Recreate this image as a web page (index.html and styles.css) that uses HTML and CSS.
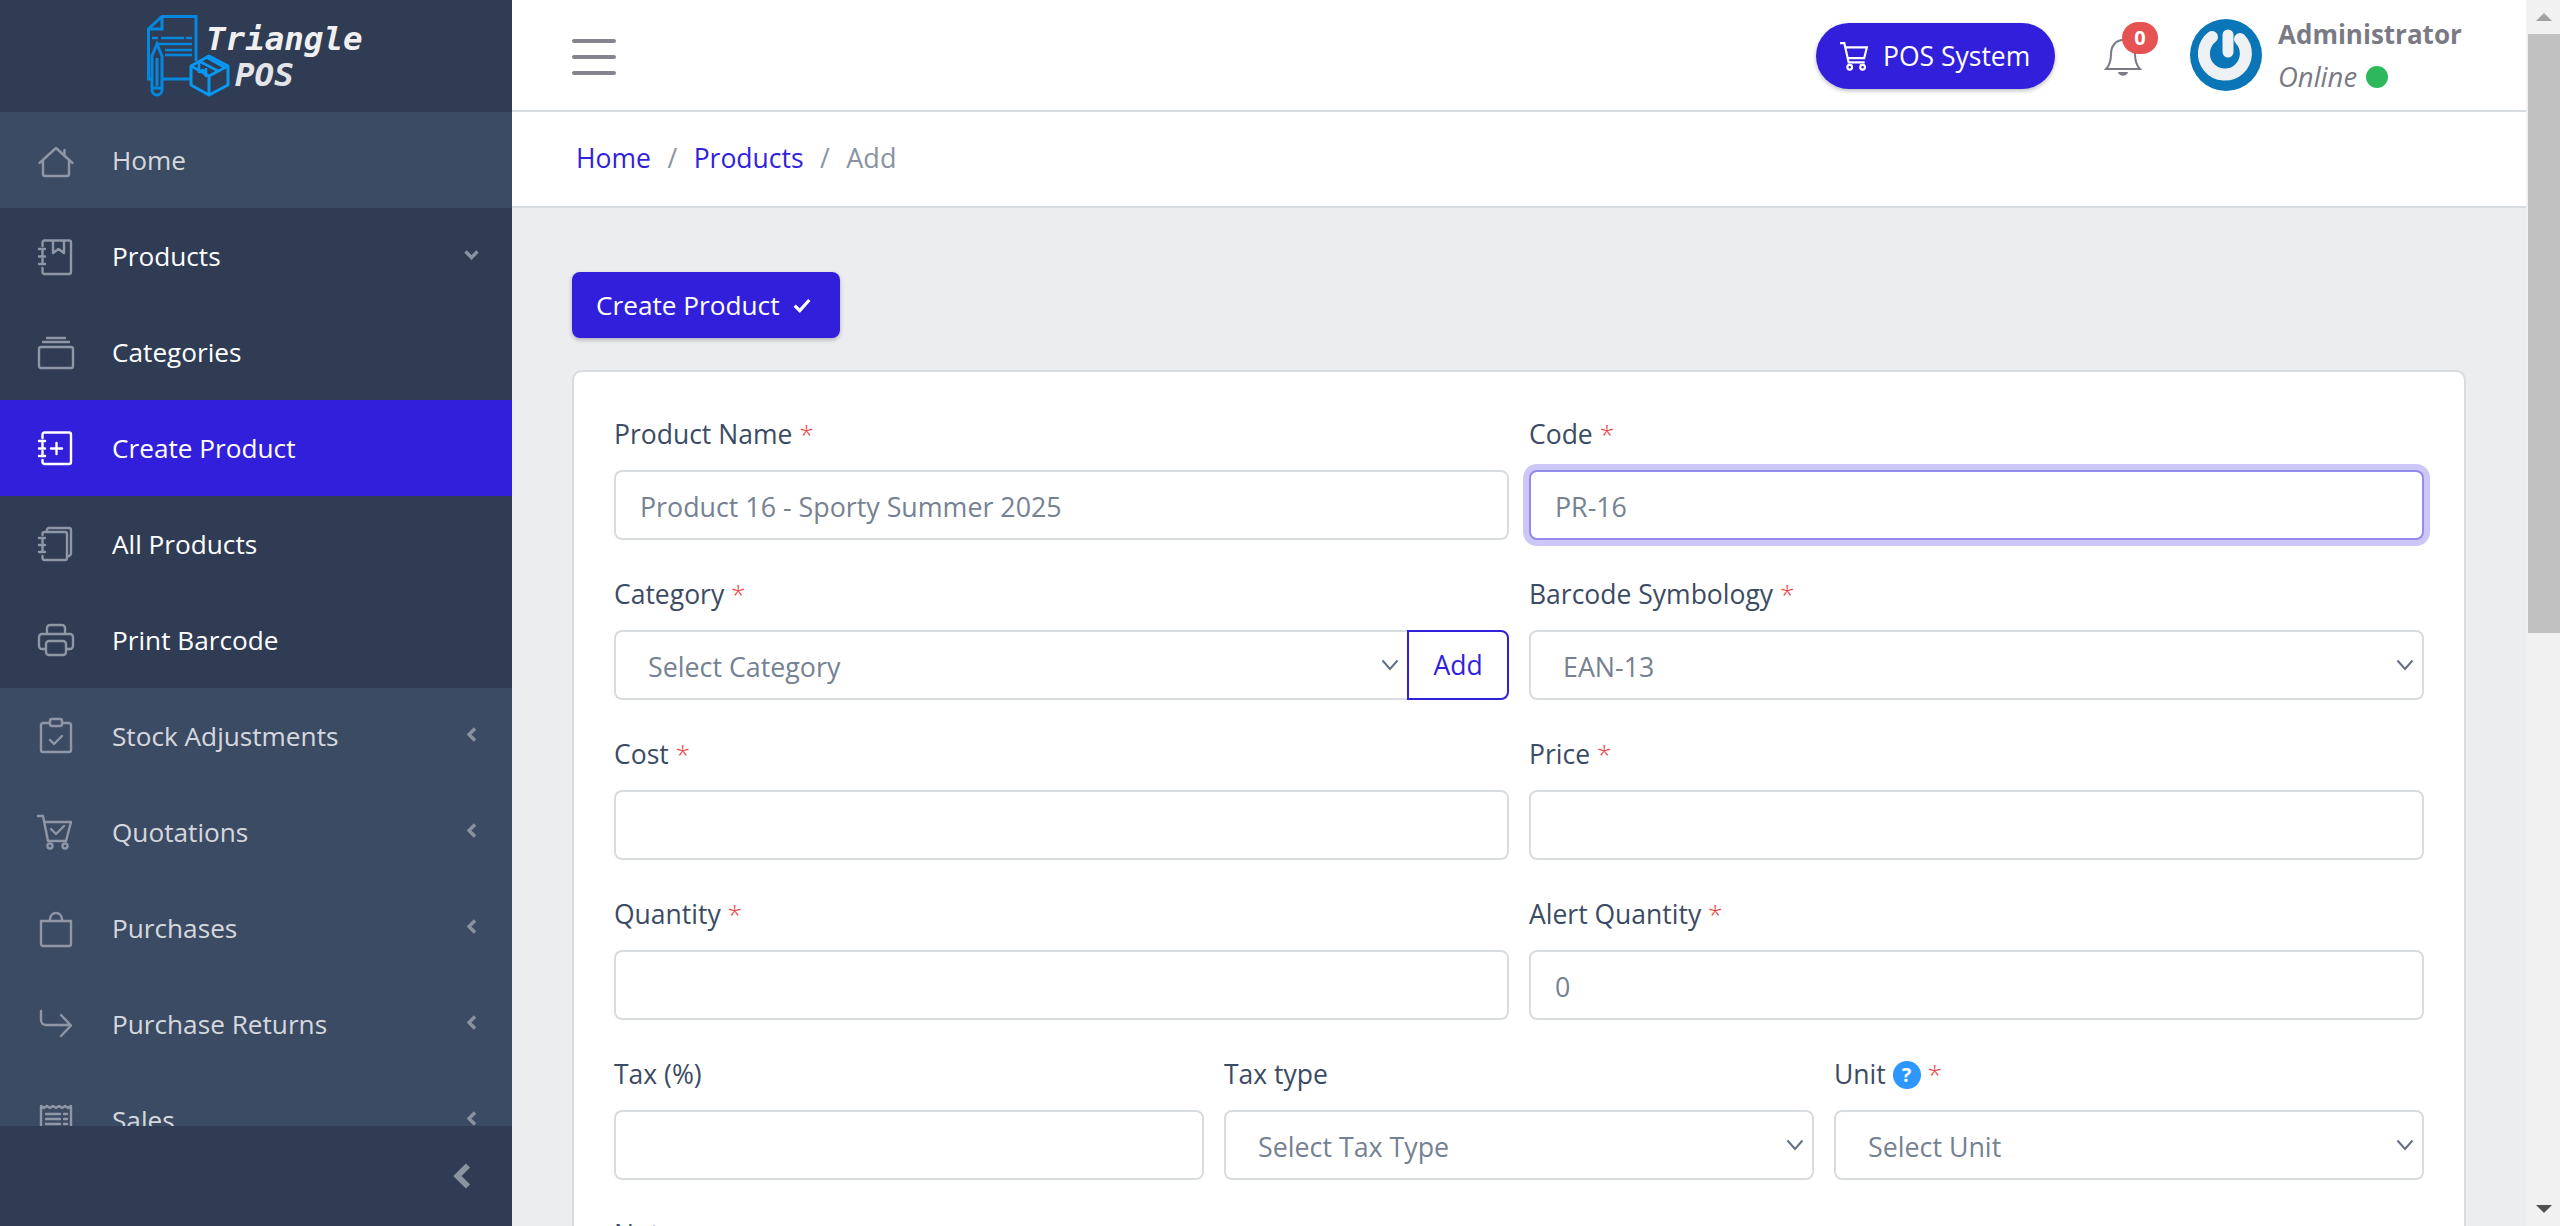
FILE: index.html
```html
<!DOCTYPE html>
<html lang="en">
<head>
<meta charset="utf-8">
<title>Triangle POS - Create Product</title>
<link rel="stylesheet" href="styles.css">
</head>
<body>
<div class="app">
  <aside class="sidebar">
    <div class="brand">
      <svg class="brand-mark" viewBox="145 12 87 86" fill="none" stroke-width="3">
        <g stroke="#0487dd">
          <path d="M190 79H148.500V29L162 16.500H196V61"/>
          <path d="M162 16.500V29H148.500"/>
          <path d="M152 38H158M161 38H184M186 38H192" stroke-width="2.400"/>
          <path d="M158 44H192M165 50H192M165 55H192" stroke-width="2.400"/>
          <path d="M152 88V56L157 44L162 56V88ZM152 88V90a5 5 0 0 0 10 0V88M157 58V86" fill="#303c54"/>
        </g>
        <g stroke="#0898f2" stroke-linejoin="round">
          <path d="M209 56L228 66V85L209 95L191 85V66Z" fill="#303c54"/>
          <path d="M191 66L209 76L228 66M209 76V95"/>
          <path d="M199 61L218 71M206 57L224 67M199 61V72L203 70L206 76V68" stroke-width="2.600"/>
        </g>
      </svg>
      <div class="brand-text">
        <div>Triangle</div>
        <div class="brand-sub">POS</div>
      </div>
    </div>
    <nav class="nav">
      <a class="nav-item lighter">
        <svg class="nav-icon" viewBox="0 0 36 36"><path d="M1.500 21L18 6L34.500 21M5 18V32a2 2 0 0 0 2 2H29a2 2 0 0 0 2-2V18M26.500 8V14"/></svg>
        <span class="nav-label">Home</span>
      </a>
      <div class="nav-group">
        <a class="nav-item open">
          <svg class="nav-icon" viewBox="0 0 36 36"><path d="M4.500 8V4.500a2 2 0 0 1 2-2H31a2 2 0 0 1 2 2V34a2 2 0 0 1-2 2H6.500a2 2 0 0 1-2-2V30M4.500 13V17M4.500 21V25M15 3V15L20.500 11L26 15V3M1 11H7M1 18.500H7M1 26H7"/></svg>
          <span class="nav-label">Products</span>
          <svg class="nav-chevron" viewBox="0 0 15 10"><path d="M1.500 1.500L7.500 7.500L13.500 1.500"/></svg>
        </a>
        <a class="nav-item open">
          <svg class="nav-icon" viewBox="0 0 36 36"><path d="M3 13H33a2 2 0 0 1 2 2V32a2 2 0 0 1-2 2H3a2 2 0 0 1-2-2V15a2 2 0 0 1 2-2ZM5 8H31M9 4H27"/></svg>
          <span class="nav-label">Categories</span>
        </a>
        <a class="nav-item active">
          <svg class="nav-icon" viewBox="0 0 36 36"><path d="M4.500 8V4.500a2 2 0 0 1 2-2H31a2 2 0 0 1 2 2V32a2 2 0 0 1-2 2H6.500a2 2 0 0 1-2-2V30M4.500 13V17M4.500 21V25M1 11H7M1 18.500H7M1 26H7M13 18.500H24M18.500 13V24"/></svg>
          <span class="nav-label">Create Product</span>
        </a>
        <a class="nav-item open">
          <svg class="nav-icon" viewBox="0 0 36 36"><path d="M4.500 9V8a2 2 0 0 1 2-2H27a2 2 0 0 1 2 2V32a2 2 0 0 1-2 2H6.500a2 2 0 0 1-2-2V30M4.500 14V17M4.500 21V25M1 12H7M1 19H7M1 26H7M9 6V4a2 2 0 0 1 2-2H31a2 2 0 0 1 2 2V27a3 3 0 0 1-4 3"/></svg>
          <span class="nav-label">All Products</span>
        </a>
        <a class="nav-item open">
          <svg class="nav-icon" viewBox="0 0 36 36"><path d="M9 12V6a3 3 0 0 1 3-3H24a3 3 0 0 1 3 3V12M8 27H4a3 3 0 0 1-3-3V15a3 3 0 0 1 3-3H32a3 3 0 0 1 3 3V24a3 3 0 0 1-3 3H28M11 19H25a3 3 0 0 1 3 3V30a3 3 0 0 1-3 3H11a3 3 0 0 1-3-3V22a3 3 0 0 1 3-3Z"/></svg>
          <span class="nav-label">Print Barcode</span>
        </a>
      </div>
      <a class="nav-item lighter">
        <svg class="nav-icon" viewBox="0 0 36 36"><path d="M11 5H5a2 2 0 0 0-2 2V32a2 2 0 0 0 2 2H31a2 2 0 0 0 2-2V7a2 2 0 0 0-2-2H25M14 1H22a2 2 0 0 1 2 2V6a2 2 0 0 1-2 2H14a2 2 0 0 1-2-2V3a2 2 0 0 1 2-2ZM12 22L16 26L24 18"/></svg>
        <span class="nav-label">Stock Adjustments</span>
        <svg class="nav-chevron side" viewBox="0 0 10 15"><path d="M8 1.500L2 7.500L8 13.500"/></svg>
      </a>
      <a class="nav-item lighter">
        <svg class="nav-icon" viewBox="0 0 36 36"><path d="M0 2H5L10 27H28L33 8H6M13 15L18 20L26 12"/><circle cx="12" cy="32" r="2.500"/><circle cx="27" cy="32" r="2.500"/></svg>
        <span class="nav-label">Quotations</span>
        <svg class="nav-chevron side" viewBox="0 0 10 15"><path d="M8 1.500L2 7.500L8 13.500"/></svg>
      </a>
      <a class="nav-item lighter">
        <svg class="nav-icon" viewBox="0 0 36 36"><path d="M3 11H33V34a2 2 0 0 1-2 2H5a2 2 0 0 1-2-2ZM12 11V9a6 6 0 0 1 12 0V11"/></svg>
        <span class="nav-label">Purchases</span>
        <svg class="nav-chevron side" viewBox="0 0 10 15"><path d="M8 1.500L2 7.500L8 13.500"/></svg>
      </a>
      <a class="nav-item lighter">
        <svg class="nav-icon" viewBox="0 0 36 36"><path d="M3 5V14a5 5 0 0 0 5 5H32M23 9L33 19.500L23 30"/></svg>
        <span class="nav-label">Purchase Returns</span>
        <svg class="nav-chevron side" viewBox="0 0 10 15"><path d="M8 1.500L2 7.500L8 13.500"/></svg>
      </a>
      <a class="nav-item lighter">
        <svg class="nav-icon" viewBox="0 0 36 36"><path d="M3 34V4L6 6L9 4L12 6L15 4L18 6L21 4L24 6L27 4L30 6L33 4V34M8 12H22M8 17H22M8 22H22M8 27H22M26 12H29M26 17H29M26 22H29"/></svg>
        <span class="nav-label">Sales</span>
        <svg class="nav-chevron side" viewBox="0 0 10 15"><path d="M8 1.500L2 7.500L8 13.500"/></svg>
      </a>
    </nav>
    <div class="sidebar-footer">
      <svg class="collapse-icon" viewBox="0 0 20 28"><path d="M16 3.500L5.500 14L16 24.500"/></svg>
    </div>
  </aside>

  <div class="wrapper">
    <header class="topbar">
      <button class="burger" type="button" aria-label="Toggle sidebar"><span></span><span></span><span></span></button>
      <div class="topbar-right">
        <a class="pos-btn">
          <svg class="pos-icon" viewBox="0 0 28 28"><path d="M1 2H5L9 20H24M6 6H26L23.500 16H8"/><circle cx="10" cy="24.500" r="2.200"/><circle cx="22" cy="24.500" r="2.200"/></svg>
          POS System
        </a>
        <div class="bell">
          <svg class="bell-icon" viewBox="0 0 36 40"><path d="M1 32C5 28 6 24 6 17C6 9 11 3 18 3C25 3 30 9 30 17C30 24 31 28 35 32Z"/><path class="bell-clapper" d="M13 35H23C22 40 14 40 13 35Z"/></svg>
          <span class="bell-badge">0</span>
        </div>
        <div class="user">
          <svg class="avatar" viewBox="0 0 72 72">
            <circle cx="36" cy="36" r="36" fill="#0b76b7"/>
            <path d="M22 18A21 21 0 1 0 50 20" fill="none" stroke="#eef1f3" stroke-width="12" stroke-linecap="round"/>
            <path d="M38 16V33" fill="none" stroke="#eef1f3" stroke-width="11" stroke-linecap="round"/>
          </svg>
          <div class="user-info">
            <div class="user-name">Administrator</div>
            <div class="user-status">Online <span class="status-dot"></span></div>
          </div>
        </div>
      </div>
    </header>
    <nav class="crumbs">
      <a class="crumb-link">Home</a><span class="crumb-sep">/</span><a class="crumb-link">Products</a><span class="crumb-sep">/</span><span class="crumb-current">Add</span>
    </nav>
    <main class="content">
      <button class="submit-btn" type="button">Create Product
        <svg class="check-icon" viewBox="0 0 16 14"><path d="M1.500 7.500L6 12L14.500 2.500"/></svg>
      </button>
      <form class="card">
        <div class="row two">
          <div class="field"><label class="field-label">Product Name <em>*</em></label><input class="control" type="text" value="Product 16 - Sporty Summer 2025"></div>
          <div class="field"><label class="field-label">Code <em>*</em></label><input class="control focused" type="text" value="PR-16"></div>
        </div>
        <div class="row two">
          <div class="field"><label class="field-label">Category <em>*</em></label>
            <div class="input-group"><select class="control select"><option>Select Category</option></select><button class="add-btn" type="button">Add</button></div>
          </div>
          <div class="field"><label class="field-label">Barcode Symbology <em>*</em></label><select class="control select"><option>EAN-13</option></select></div>
        </div>
        <div class="row two">
          <div class="field"><label class="field-label">Cost <em>*</em></label><input class="control" type="text"></div>
          <div class="field"><label class="field-label">Price <em>*</em></label><input class="control" type="text"></div>
        </div>
        <div class="row two">
          <div class="field"><label class="field-label">Quantity <em>*</em></label><input class="control" type="text"></div>
          <div class="field"><label class="field-label">Alert Quantity <em>*</em></label><input class="control" type="text" value="0"></div>
        </div>
        <div class="row three">
          <div class="field"><label class="field-label">Tax (%)</label><input class="control" type="text"></div>
          <div class="field"><label class="field-label">Tax type</label><select class="control select"><option>Select Tax Type</option></select></div>
          <div class="field"><label class="field-label">Unit <span class="help">?</span> <em>*</em></label><select class="control select"><option>Select Unit</option></select></div>
        </div>
        <div class="row one">
          <div class="field"><label class="field-label">Note</label></div>
        </div>
      </form>
    </main>
  </div>

  <div class="scrollbar">
    <div class="scroll-btn"><span class="arrow-up"></span></div>
    <div class="scroll-thumb"></div>
    <div class="scroll-rest"></div>
    <div class="scroll-btn"><span class="arrow-down"></span></div>
  </div>
</div>
</body>
</html>
```
FILE: styles.css
```css
* { box-sizing: border-box; }
html, body { margin: 0; height: 100%; overflow: hidden; }
body {
  font-family: "Open Sans", "Noto Sans", "Liberation Sans", sans-serif;
  font-size: 26px;
  line-height: 42px;
  color: #3c4b64;
  background: #ebedef;
}
.app { display: flex; height: 1226px; }

/* sidebar */
.sidebar { width: 512px; flex: none; display: flex; flex-direction: column; background: #3c4b64; height: 100%; }
.brand { height: 112px; flex: none; background: #303c54; display: flex; align-items: flex-start; padding: 12px 0 0 145px; }
.brand-mark { width: 87px; height: 86px; flex: none; }
.brand-text { margin: 9px 0 0 -26px; font-family: "DejaVu Sans Mono", "Liberation Mono", monospace; font-weight: 700; font-style: italic; font-size: 32.500px; line-height: 36px; color: #f0f0f2; position: relative; }
.brand-sub { margin-left: 29px; color: #e4e5e8; }
.nav { flex: 1; min-height: 0; overflow: hidden; }
.nav-group { background: #303c54; }
.nav-item { height: 96px; display: flex; align-items: center; padding: 0 0 1px 38px; font-size: 26.200px; color: rgba(255,255,255,.8); }
.nav-item.open { color: #fff; }
.nav-item.active { background: #321fdb; color: #fff; }
.nav-icon { width: 36px; height: 36px; flex: none; margin-right: 38px; fill: none; stroke: #8f97a6; stroke-width: 2.400; stroke-linecap: round; stroke-linejoin: round; overflow: visible; }
.active .nav-icon { stroke: #fff; }
.nav-label { flex: 1; white-space: nowrap; }
.nav-chevron { width: 15px; height: 10px; flex: none; margin: 0 33px 0 0; fill: none; stroke: #8a93a2; stroke-width: 3.400; overflow: visible; position: relative; top: -1px; }
.nav-chevron.side { width: 10px; height: 15px; margin-right: 35px; }
.sidebar-footer { height: 100px; flex: none; background: #303c54; display: flex; align-items: center; justify-content: flex-end; padding-right: 40px; }
.collapse-icon { width: 20px; height: 28px; fill: none; stroke: #8a93a2; stroke-width: 6; }

/* main column */
.wrapper { flex: 1; min-width: 0; display: flex; flex-direction: column; height: 100%; overflow: hidden; }
.topbar { height: 112px; flex: none; background: #fff; border-bottom: 2px solid #d8dbe0; display: flex; align-items: center; padding: 0 64px 0 60px; }
.burger { width: 44px; height: 36px; padding: 0; border: 0; background: none; display: flex; flex-direction: column; justify-content: space-between; margin-top: 4px; }
.burger span { display: block; height: 4px; border-radius: 2px; background: #85858f; }
.topbar-right { margin-left: auto; display: flex; align-items: center; }
.pos-btn { height: 66px; width: 239px; border-radius: 33px; background: #321fdb; color: #fff; font-size: 26.500px; display: flex; align-items: center; padding-left: 23px; margin-top: 2px; box-shadow: 0 2px 4px rgba(0,0,21,.25); white-space: nowrap; }
.pos-icon { width: 30px; height: 30px; margin-right: 14px; fill: none; stroke: #fff; stroke-width: 2; }
.bell { position: relative; width: 36px; height: 40px; margin: 4px 0 0 50px; }
.bell-icon { width: 36px; height: 40px; fill: none; stroke: #7b7b85; stroke-width: 2; overflow: visible; display: block; }
.bell-clapper { fill: #7b7b85; stroke: none; }
.bell-badge { position: absolute; left: 17px; top: -15px; width: 36px; height: 32px; border-radius: 16px; background: #e55353; color: #fff; font-size: 20px; font-weight: 700; line-height: 32px; text-align: center; }
.user { display: flex; align-items: center; margin-left: 49px; }
.avatar { width: 72px; height: 72px; flex: none; margin-right: 16px; }
.user-info { width: 184px; padding-top: 3px; }
.user-name { font-weight: 700; color: #7a7a85; line-height: 38px; white-space: nowrap; }
.user-status { margin-top: 3px; font-style: italic; font-size: 27.500px; color: #7a7a85; line-height: 42px; display: flex; align-items: center; gap: 9px; }
.status-dot { width: 22px; height: 22px; border-radius: 50%; background: #2eb85c; }

/* breadcrumb */
.crumbs { height: 96px; flex: none; background: #fff; border-bottom: 2px solid #d8dbe0; display: flex; align-items: center; padding: 0 0 2px 64px; font-size: 26.500px; }
.crumb-link { color: #321fdb; }
.crumb-sep { color: #8a93a2; margin: 0 16.500px; }
.crumb-current { color: #8a93a2; font-size: 27px; }

/* content */
.content { padding: 64px 60px 0; flex: 1; min-height: 0; overflow: hidden; }
.submit-btn { display: flex; align-items: center; width: 268px; height: 66px; padding: 0 0 0 24px; border: 0; border-radius: 8px; background: #321fdb; color: #fff; font: inherit; font-size: 26.200px; box-shadow: 0 2px 4px rgba(0,0,21,.25); white-space: nowrap; }
.check-icon { width: 18px; height: 16px; margin-left: 14px; fill: none; stroke: #fff; stroke-width: 2.800; }
.card { margin-top: 32px; background: #fff; border: 2px solid #d8dbe0; border-radius: 10px; padding: 40px; }
.row { display: grid; gap: 20px; margin-bottom: 32px; }
.row.two { grid-template-columns: 1fr 1fr; }
.row.three { grid-template-columns: 1fr 1fr 1fr; }
.field { min-width: 0; }
.field-label { display: block; height: 42px; margin-bottom: 16px; padding-top: 1px; font-size: 26.500px; white-space: nowrap; }
.field-label em { font-style: normal; font-weight: 300; color: #ec4646; }
.control { display: block; width: 100%; height: 70px; padding: 2px 24px 0; border: 2px solid #d8dbe0; border-radius: 8px; background: #fff; color: #768192; font: inherit; font-size: 26.800px; outline: 0; }
.control.focused { border-color: #958bef; box-shadow: 0 0 0 6px rgba(50,31,219,.25); }
.select { appearance: none; padding-top: 4px; padding-left: 32px; background-image: url("data:image/svg+xml,%3Csvg xmlns='http://www.w3.org/2000/svg' viewBox='0 0 18 12'%3E%3Cpath d='M1.500 1.500L9 10L16.500 1.500' fill='none' stroke='%23636f83' stroke-width='2'/%3E%3C/svg%3E"); background-repeat: no-repeat; background-position: right 8px center; background-size: 18px 12px; }
.input-group { display: flex; }
.input-group .select { flex: 1; min-width: 0; border-right: 0; border-radius: 8px 0 0 8px; }
.add-btn { width: 102px; flex: none; height: 70px; padding: 0; border: 2px solid #321fdb; border-radius: 0 8px 8px 0; background: #fff; color: #321fdb; font: inherit; font-size: 26.500px; }
.help { display: inline-block; width: 28px; height: 28px; border-radius: 50%; background: #2e97ff; color: #fff; font-size: 20px; font-weight: 700; line-height: 28px; text-align: center; vertical-align: 2px; }

/* scrollbar */
.scrollbar { width: 34px; flex: none; height: 100%; background: #f1f1f1; display: flex; flex-direction: column; padding-left: 2px; }
.scroll-btn { height: 34px; flex: none; display: flex; align-items: center; justify-content: center; }
.scroll-thumb { height: 599px; flex: none; background: #c1c1c1; }
.scroll-rest { flex: 1; }
.arrow-up { width: 0; height: 0; border-left: 8px solid transparent; border-right: 8px solid transparent; border-bottom: 8px solid #a3a3a3; }
.arrow-down { width: 0; height: 0; border-left: 8px solid transparent; border-right: 8px solid transparent; border-top: 8px solid #505050; }
```
